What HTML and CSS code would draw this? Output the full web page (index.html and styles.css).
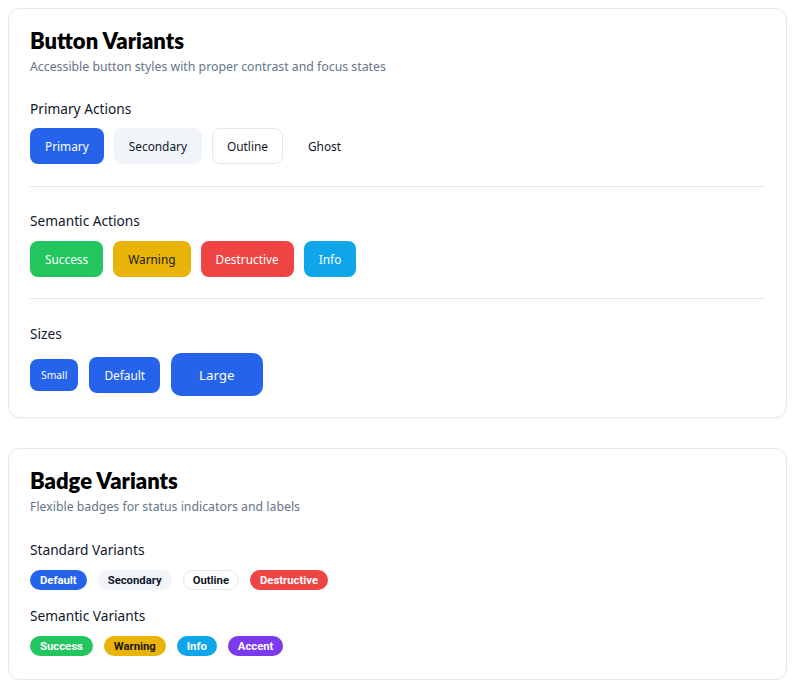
FILE: index.html
```html
<!DOCTYPE html>
<html>
<head>
<meta charset="utf-8">
<link rel="stylesheet" href="styles.css">
</head>
<body>
<div class="page">
  <section class="card">
    <h2 class="card-title">Button Variants</h2>
    <p class="card-desc">Accessible button styles with proper contrast and focus states</p>
    <div class="group">
      <h3 class="group-label">Primary Actions</h3>
      <div class="row">
        <button class="btn btn-primary">Primary</button>
        <button class="btn btn-secondary">Secondary</button>
        <button class="btn btn-outline">Outline</button>
        <button class="btn btn-ghost">Ghost</button>
      </div>
    </div>
    <hr class="divider">
    <div class="group">
      <h3 class="group-label">Semantic Actions</h3>
      <div class="row">
        <button class="btn btn-success">Success</button>
        <button class="btn btn-warning">Warning</button>
        <button class="btn btn-destructive">Destructive</button>
        <button class="btn btn-info">Info</button>
      </div>
    </div>
    <hr class="divider divider-b">
    <div class="group">
      <h3 class="group-label">Sizes</h3>
      <div class="row row-center">
        <button class="btn btn-primary btn-sm">Small</button>
        <button class="btn btn-primary">Default</button>
        <button class="btn btn-primary btn-lg">Large</button>
      </div>
    </div>
  </section>

  <section class="card card-badges">
    <h2 class="card-title">Badge Variants</h2>
    <p class="card-desc">Flexible badges for status indicators and labels</p>
    <div class="bgroup">
      <h3 class="group-label">Standard Variants</h3>
      <div class="brow">
        <span class="badge badge-default">Default</span>
        <span class="badge badge-secondary">Secondary</span>
        <span class="badge badge-outline">Outline</span>
        <span class="badge badge-destructive">Destructive</span>
      </div>
    </div>
    <div class="bgroup">
      <h3 class="group-label">Semantic Variants</h3>
      <div class="brow">
        <span class="badge badge-success">Success</span>
        <span class="badge badge-warning">Warning</span>
        <span class="badge badge-info">Info</span>
        <span class="badge badge-accent">Accent</span>
      </div>
    </div>
  </section>
</div>
</body>
</html>
```

FILE: styles.css
```css
* { box-sizing: border-box; }
body {
  margin: 8px;
  background: #ffffff;
  font-family: "Noto Sans", "Open Sans", sans-serif;
  color: #0f172a;
}
.page {
  display: flex;
  flex-direction: column;
  gap: 30px;
}
.card {
  border: 1px solid #e2e8f0;
  border-radius: 12px;
  padding: 18px 21px 21px;
  background: #fff;
  box-shadow: 0 1px 2px rgba(15, 23, 42, 0.04);
}
.card-badges { padding-bottom: 23px; }
.card-title {
  margin: 0;
  font-family: "Lato", sans-serif;
  font-weight: 800;
  font-size: 22px;
  line-height: 28px;
  color: #000;
}
.card-desc {
  margin: 3px 0 0;
  font-size: 12.3px;
  line-height: 18px;
  color: #64748b;
}
.group { margin-top: 23px; }
.divider + .group { margin-top: 24px; }
.divider-b + .group { margin-top: 25px; }
.group-label {
  margin: 0 0 9px;
  font-size: 13.7px;
  font-weight: 400;
  line-height: 20px;
  color: #0f172a;
}
.semantic-row { margin-top: 0; }
.row {
  display: flex;
  gap: 10px;
}
.row-center { align-items: center; gap: 11px; }
.btn {
  font-family: "Noto Sans", sans-serif;
  font-size: 11.85px;
  height: 36px;
  padding: 0 14px;
  border-radius: 8px;
  border: 1px solid transparent;
  cursor: pointer;
  background: transparent;
  color: #0f172a;
}
.btn-primary { background: #2563eb; color: #fff; }
.btn-secondary { background: #f1f5f9; color: #0f172a; }
.btn-outline { background: #fff; border-color: #e2e8f0; }
.btn-success { background: #22c55e; color: #fff; }
.btn-warning { background: #eab308; color: #1a1a1a; }
.btn-destructive { background: #ef4444; color: #fff; }
.btn-info { background: #0ea5e9; color: #fff; }
.btn-sm { height: 32px; padding: 0 10px; font-size: 10.3px; }
.btn-lg { height: 43px; padding: 0 27px; font-size: 13.3px; border-radius: 10px; }
.divider {
  border: 0;
  border-top: 1px solid #e2e8f0;
  margin: 22px 0 0;
}
.divider + .group .group-label { margin-bottom: 10px; }
.divider-b { margin-top: 21px; }
.divider-b + .group .group-label { margin-bottom: 9px; }
.bgroup { margin-top: 24px; }
.bgroup + .bgroup { margin-top: 16px; }
.bgroup .group-label { margin-bottom: 10px; }
.brow {
  display: flex;
  gap: 11px;
}
.badge {
  display: inline-flex;
  align-items: center;
  height: 20px;
  padding: 0 9px;
  border-radius: 999px;
  font-family: "Roboto", "Noto Sans", sans-serif;
  font-size: 11.3px;
  font-weight: 700;
  border: 1px solid transparent;
  color: #fff;
}
.badge-default { background: #2563eb; }
.badge-secondary { background: #f1f5f9; color: #0f172a; }
.badge-outline { background: #fff; border-color: #e2e8f0; color: #0f172a; }
.badge-destructive { background: #ef4444; }
.badge-success { background: #22c55e; }
.badge-warning { background: #eab308; color: #1a1a1a; }
.badge-info { background: #0ea5e9; }
.badge-accent { background: #7c3aed; }
```
